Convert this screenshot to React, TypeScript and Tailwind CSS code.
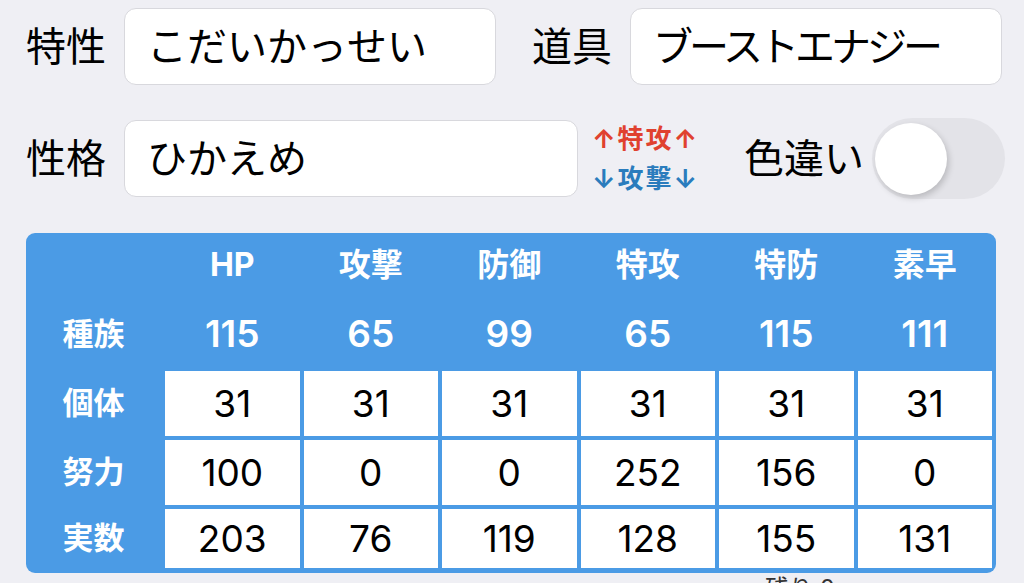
import React from 'react';

const stats = ['HP', '攻撃', '防御', '特攻', '特防', '素早'];

const rows = [
    { label: '個体', values: [31, 31, 31, 31, 31, 31], h: 'h-[65px]' },
    { label: '努力', values: [100, 0, 0, 252, 156, 0], h: 'h-[65px]' },
    { label: '実数', values: [203, 76, 119, 128, 155, 131], h: 'h-[59px]' },
];

const base = [115, 65, 99, 65, 115, 111];

const Field = ({ value, width, extra = '' }: { value: string; width: string; extra?: string }) => (
    <div className={`${width} h-[77px] bg-white rounded-[12px] border border-[#d8d8dd] flex items-center pl-[22px] text-[40px] text-black whitespace-nowrap ${extra}`}>
        {value}
    </div>
);

const App = () => {
    return (
        <div
            className="w-[1024px] h-[583px] overflow-hidden bg-[#efeff4] text-black"
            style={{ fontFamily: 'Inter, "Noto Sans CJK JP", sans-serif' }}
        >
            {/* Row 1 */}
            <div className="flex items-center pt-[8px] pl-[26px]">
                <span className="text-[40px] w-[98px] leading-none">特性</span>
                <Field value="こだいかっせい" width="w-[372px]" />
                <span className="text-[40px] ml-[36px] w-[98px] leading-none">道具</span>
                <Field value="ブーストエナジー" width="w-[372px]" extra="tracking-[-4px]" />
            </div>

            {/* Row 2 */}
            <div className="flex items-center mt-[33px] pl-[26px]">
                <span className="text-[40px] w-[98px] leading-none">性格</span>
                <Field value="ひかえめ" width="w-[454px]" />
                <div className="ml-[14px] flex flex-col text-[26px] font-bold leading-[40px] tracking-[2px] whitespace-nowrap">
                    <span className="text-[#e0412f]">↑特攻↑</span>
                    <span className="text-[#2a7cbd]">↓攻撃↓</span>
                </div>
                <span className="text-[40px] ml-[45px] leading-none whitespace-nowrap">色違い</span>
                <div className="ml-[8px] w-[133px] h-[81px] shrink-0 rounded-full bg-[#e3e3e8] flex items-center pl-[3px]">
                    <div className="w-[72px] h-[72px] rounded-full bg-white shadow-[2px_3px_6px_rgba(0,0,0,0.18)]"></div>
                </div>
            </div>

            {/* Stats table */}
            <div className="ml-[26px] mt-[34px] w-[970px] bg-[#4b9be5] rounded-[9px] pr-[4px] pb-[5px]">
                <div className="grid grid-cols-[135px_repeat(6,1fr)] gap-x-[4px] gap-y-[4px]">
                    <div className="h-[64px]"></div>
                    {stats.map((s) => (
                        <div key={s} className="h-[64px] flex items-center justify-center text-white font-bold text-[32px]">
                            {s}
                        </div>
                    ))}

                    <div className="h-[66px] flex items-center justify-center text-white font-bold text-[31px]">種族</div>
                    {base.map((v, i) => (
                        <div key={i} className="h-[66px] flex items-center justify-center text-white font-semibold text-[37px]">
                            {v}
                        </div>
                    ))}

                    {rows.map((row) => (
                        <React.Fragment key={row.label}>
                            <div className={`${row.h} flex items-center justify-center text-white font-bold text-[31px]`}>
                                {row.label}
                            </div>
                            {row.values.map((v, i) => (
                                <div key={i} className={`${row.h} bg-white flex items-center justify-center text-[37px] text-black`}>
                                    {v}
                                </div>
                            ))}
                        </React.Fragment>
                    ))}
                </div>
            </div>

            <div className="mt-[4px] ml-[765px] text-[24px] text-[#333] leading-none">残り 0</div>
        </div>
    );
};

export default App;
